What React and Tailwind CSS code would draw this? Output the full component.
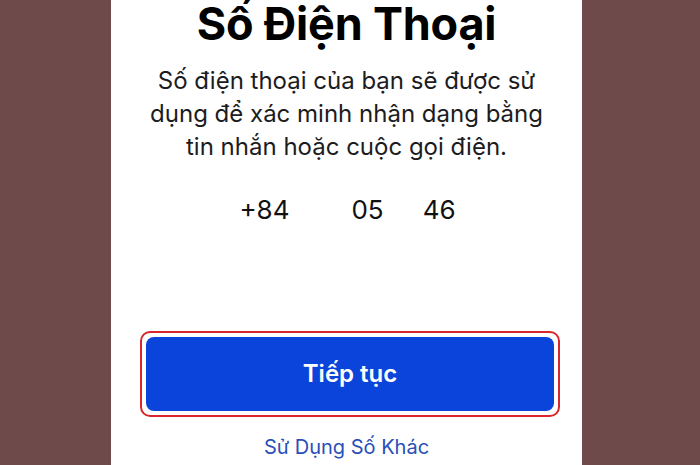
import React from 'react';

export default function App() {
  return (
    <div className="w-[700px] h-[465px] bg-[#6e4a4a] flex pl-[111px] overflow-hidden font-['Inter',sans-serif]">
      <div className="w-[471px] h-full bg-white flex flex-col items-center">
        {/* Heading */}
        <h1 className="mt-[-4px] text-[45px] leading-[56px] font-bold text-black tracking-[-0.2px]">
          Số Điện Thoại
        </h1>
        <p className="mt-[12px] text-center text-[24px] leading-[33px] text-[#1c1c1e]">
          Số điện thoại của bạn sẽ được sử
          <br />
          dụng để xác minh nhận dạng bằng
          <br />
          tin nhắn hoặc cuộc gọi điện.
        </p>

        {/* Phone number */}
        <div className="mt-[30px] flex items-baseline text-[26px] leading-[34px] text-[#111] ml-[2px]">
          <span>+84</span>
          <span className="ml-[62px]">05</span>
          <span className="ml-[39px]">46</span>
        </div>

        {/* Continue button, outlined in red */}
        <div className="mt-[104px] ml-[7px] rounded-[10px] border-2 border-[#d9262c] p-[4px]">
          <button className="w-[408px] h-[74px] rounded-[8px] bg-[#0a44da] text-white text-[24px] font-semibold">
            Tiếp tục
          </button>
        </div>

        <a className="mt-[18px] text-[20px] leading-[25px] text-[#2a4fb8]">Sử Dụng Số Khác</a>
      </div>
    </div>
  );
}
